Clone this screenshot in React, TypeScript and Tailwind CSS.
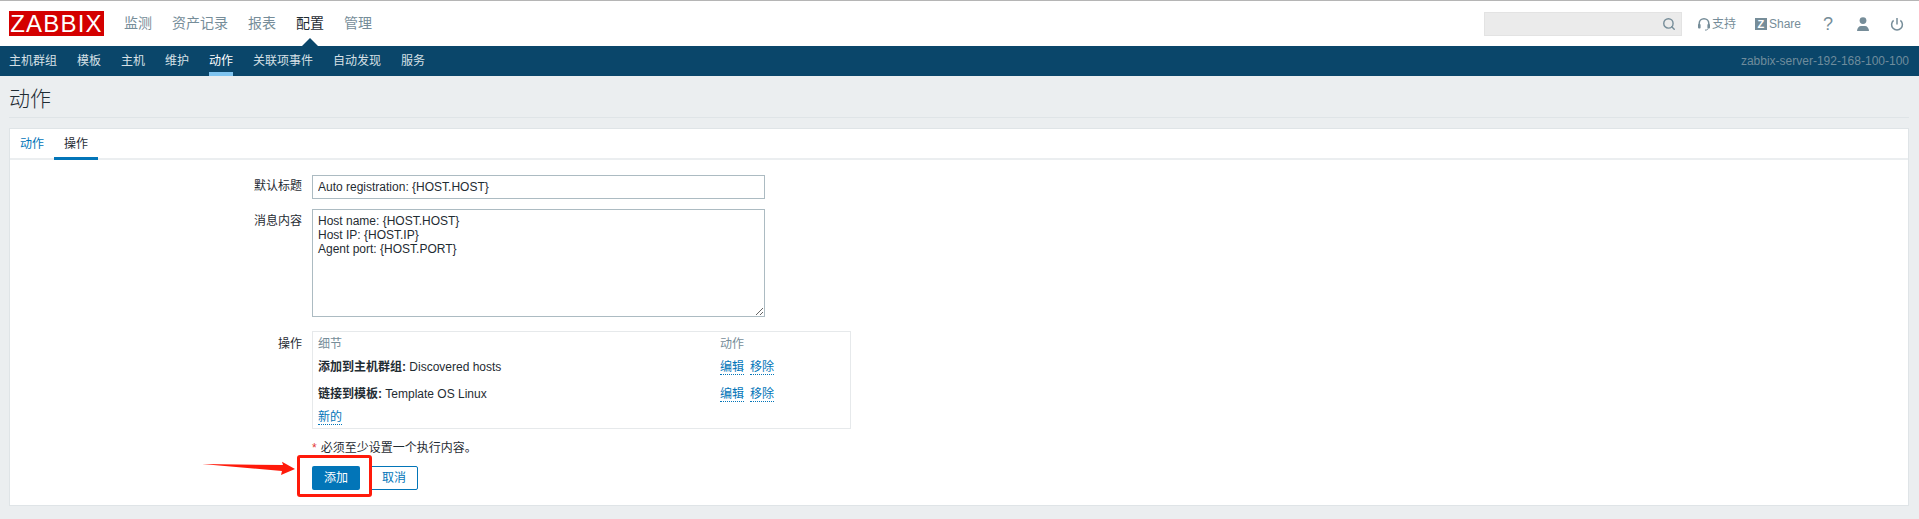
import { Search } from "lucide-react";

const FONT = "font-['Liberation_Sans','Noto_Sans_CJK_SC',sans-serif]";

const topMenu = ["监测", "资产记录", "报表", "配置", "管理"];
const subMenu = ["主机群组", "模板", "主机", "维护", "动作", "关联项事件", "自动发现", "服务"];

const TextLink = ({ children }: { children: React.ReactNode }) => (
  <a className="inline-block leading-[14px] text-[#0275b8] border-b border-dotted border-[#0275b8]">
    {children}
  </a>
);

const Header = () => (
  <header className="h-[46px] bg-white border-t border-[#b5b5b5] flex items-center pl-[9px] pr-[15px]">
    <div className="w-[95px] h-[25px] bg-[#d40000] text-white text-[24px] leading-[25px] text-center tracking-[1.2px]">
      ZABBIX
    </div>
    <nav className="flex gap-5 ml-5 pb-[1px] text-sm">
      {topMenu.map((item) => (
        <a key={item} className={"relative " + (item === "配置" ? "text-[#1f2c33]" : "text-[#768d99]")}>
          {item}
          {item === "配置" && (
            <span className="absolute left-1/2 -ml-2 top-[25px] w-0 h-0 border-x-8 border-x-transparent border-b-8 border-b-[#0a466a]" />
          )}
        </a>
      ))}
    </nav>
    <div className="ml-auto w-[198px] h-6 bg-[#ebebeb] border border-[#e3e3e3] flex items-center justify-end pr-[5px]">
      <Search size={14} strokeWidth={2.4} className="text-[#768d99]" />
    </div>
    <div className="flex items-center ml-4 text-xs text-[#768d99]">
      <svg width="12" height="14" viewBox="0 0 12 14" fill="none" className="mr-[2px]">
        <path d="M1.2 9V6.5a4.8 4.8 0 0 1 9.6 0V9" stroke="#768d99" strokeWidth="1.5" />
        <rect x="0" y="7" width="2.6" height="4.5" rx="1" fill="#768d99" />
        <rect x="9.4" y="7" width="2.6" height="4.5" rx="1" fill="#768d99" />
        <path d="M10 11.5c0 1-1 1.6-3 1.6" stroke="#768d99" strokeWidth="1" />
      </svg>
      支持
    </div>
    <div className="flex items-center ml-[19px] text-xs text-[#768d99]">
      <span className="w-3 h-3 bg-[#768d99] text-white text-[11px] leading-3 font-bold text-center mr-[2px]">Z</span>
      Share
    </div>
    <span className="ml-[22px] w-[10px] text-center text-[18px] leading-5 text-[#768d99]">?</span>
    <svg width="14" height="14" viewBox="0 0 14 14" className="ml-[23px]" fill="#768d99">
      <circle cx="7" cy="3.6" r="3.4" />
      <path d="M1 14c0-3 2-5 4-5h4c2 0 4 2 4 5z" />
    </svg>
    <svg width="14" height="14" viewBox="0 0 14 14" className="ml-[20px]" fill="none" stroke="#768d99" strokeWidth="1.5">
      <path d="M3.6 3.4a5.4 5.4 0 1 0 6.8 0" />
      <path d="M7 1v6.5" />
    </svg>
  </header>
);

const SubNav = () => (
  <nav className="h-[30px] bg-[#0a466a] flex items-stretch pl-[9px] pr-[10px] text-xs">
    <div className="flex gap-5">
      {subMenu.map((item) => (
        <a
          key={item}
          className={
            "flex items-center border-b-4 pt-1 " +
            (item === "动作" ? "border-[#7fc4f0] text-white" : "border-transparent text-[#d6e0e6]")
          }
        >
          {item}
        </a>
      ))}
    </div>
    <div className="ml-auto flex items-center text-[#6f8c9c]">zabbix-server-192-168-100-100</div>
  </nav>
);

const Operations = () => (
  <div className="w-[539px] h-[98px] border border-[#e6e9eb] ml-[10px] px-[5px]">
    <table className="w-full table-fixed">
      <thead>
        <tr className="h-6 text-[#768d99]">
          <td className="w-[402px] font-normal">细节</td>
          <td>动作</td>
        </tr>
      </thead>
      <tbody>
        <tr className="h-[22px]">
          <td>
            <b>添加到主机群组:</b> Discovered hosts
          </td>
          <td>
            <TextLink>编辑</TextLink>
            <span className="ml-[6px]">
              <TextLink>移除</TextLink>
            </span>
          </td>
        </tr>
        <tr className="h-[27px]">
          <td className="pt-[5px]">
            <b>链接到模板:</b> Template OS Linux
          </td>
          <td className="pt-[5px]">
            <TextLink>编辑</TextLink>
            <span className="ml-[6px]">
              <TextLink>移除</TextLink>
            </span>
          </td>
        </tr>
        <tr className="h-[23px]">
          <td>
            <TextLink>新的</TextLink>
          </td>
          <td />
        </tr>
      </tbody>
    </table>
  </div>
);

const ActionForm = () => (
  <div className="pt-[15px] pb-[15px]">
    <div className="flex">
      <label className="w-[292px] text-right leading-[22px]">默认标题</label>
      <input
        readOnly
        value="Auto registration: {HOST.HOST}"
        className="ml-[10px] w-[453px] h-6 border border-[#acbbc2] px-[5px] outline-none"
      />
    </div>
    <div className="flex mt-[10px]">
      <label className="w-[292px] text-right leading-6">消息内容</label>
      <textarea
        readOnly
        value={"Host name: {HOST.HOST}\nHost IP: {HOST.IP}\nAgent port: {HOST.PORT}"}
        className="ml-[10px] w-[453px] h-[108px] border border-[#acbbc2] px-[5px] py-1 leading-[14px] outline-none"
      />
    </div>
    <div className="flex mt-[14px]">
      <label className="w-[292px] text-right leading-[26px]">操作</label>
      <Operations />
    </div>
    <div className="ml-[302px] mt-3 leading-[14px]">
      <span className="text-[#e33734]">*</span>
      <span className="ml-1">必须至少设置一个执行内容。</span>
    </div>
    <div className="ml-[302px] mt-[11px] flex gap-[10px]">
      <button className="w-12 h-6 bg-[#0275b8] text-white rounded-[2px]">添加</button>
      <button className="w-12 h-6 border border-[#0275b8] text-[#0275b8] rounded-[2px]">取消</button>
    </div>
  </div>
);

export default function App() {
  return (
    <div className={FONT + " relative w-full h-[519px] overflow-hidden bg-[#ebeef0] text-xs text-[#1f2c33]"}>
      <Header />
      <SubNav />
      <div className="pl-[9px] pr-[10px]">
        <h1 className="h-[42px] leading-[45px] text-[21px] font-light border-b border-[#dfe4e7]">动作</h1>
        <main className="mt-[10px] h-[378px] bg-white border border-[#dfe4e7]">
          <div className="h-[31px] border-b-2 border-[#ebeef0] flex">
            <a className="w-[44px] text-center leading-[30px] text-[#0275b8]">动作</a>
            <a className="w-[44px] text-center leading-[30px] h-[31px] border-b-[3px] border-[#0275b8]">操作</a>
          </div>
          <ActionForm />
        </main>
      </div>
      {/* red annotation drawn on the screenshot */}
      <div className="absolute left-[297px] top-[455px] w-[75px] h-[42px] border-[3px] border-[#ff1a0a] rounded-[3px]" />
      <svg className="absolute left-[200px] top-[458px]" width="100" height="20" viewBox="0 0 100 20">
        <path d="M2 6 L83 7 L82 3.7 L95 11 L81 17 L82 13 Z" fill="#ff1a0a" />
      </svg>
    </div>
  );
}
